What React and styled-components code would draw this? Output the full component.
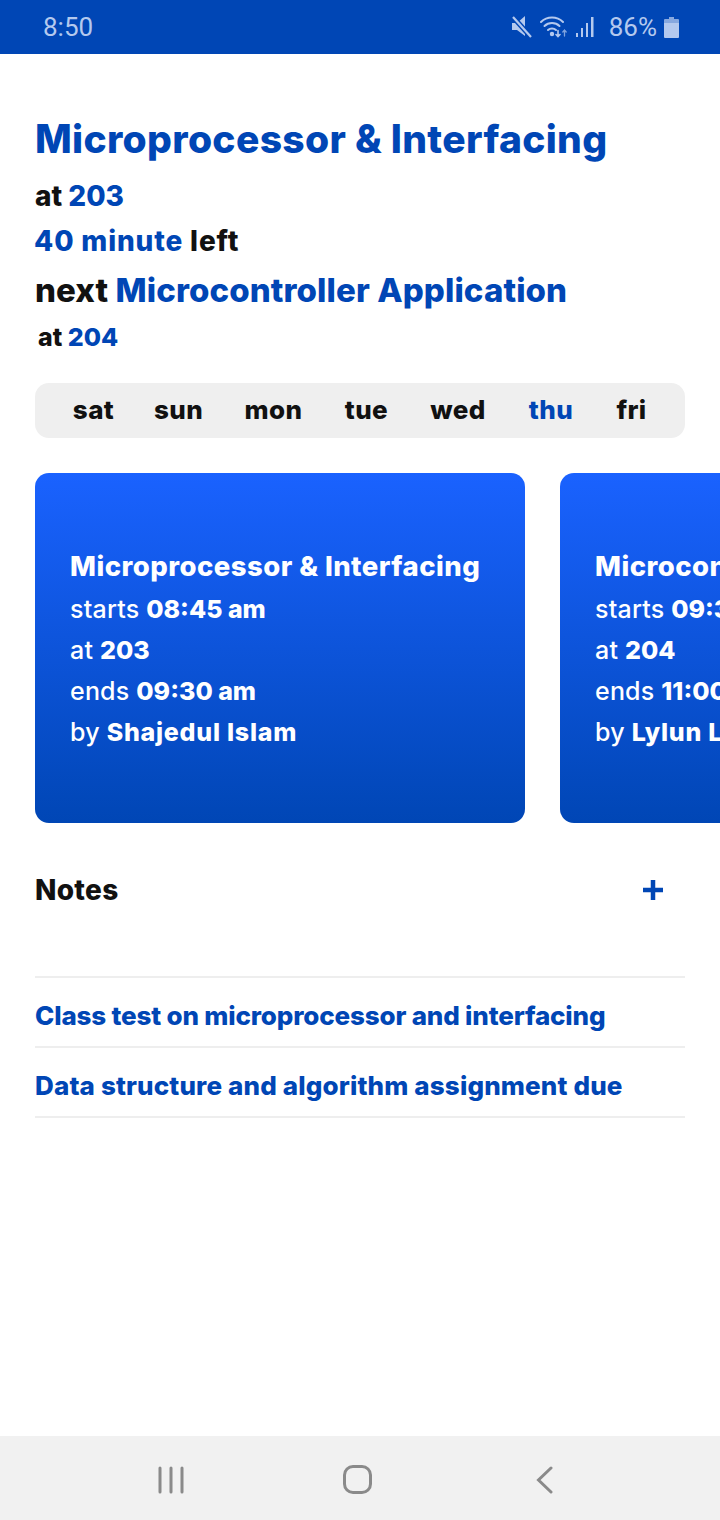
import React from "react";
import styled, { createGlobalStyle } from "styled-components";

const blue = "#0046b5";
const ink = "#111111";
const tint = "#b4c9ee";

const Global = createGlobalStyle`
  html, body { margin: 0; padding: 0; background: #fff; }
  * { box-sizing: border-box; }
  #root { width: 720px; height: 1520px; overflow: hidden; }
`;

const Screen = styled.div`
  width: 720px;
  height: 1520px;
  display: flex;
  flex-direction: column;
  font-family: Inter, "Noto Sans", sans-serif;
  color: ${ink};
  overflow: hidden;
`;

const StatusBar = styled.div`
  height: 54px;
  flex: none;
  background: ${blue};
  color: ${tint};
  font-family: Roboto, sans-serif;
  display: flex;
  align-items: center;
  justify-content: space-between;
  padding: 0 41px 0 43px;
`;
const Time = styled.span` font-size: 26px; `;
const StatusIcons = styled.div`
  display: flex;
  align-items: center;
  gap: 8px;
`;
const Battery = styled.span`
  font-size: 26px;
  margin-left: 7px;
  margin-right: -1px;
`;

const Main = styled.main`
  flex: 1;
  padding: 62px 0 0 35px;
  display: flex;
  flex-direction: column;
  min-height: 0;
`;

const Title = styled.h1`
  margin: 0 0 11px;
  font-size: 39px;
  line-height: 46px;
  font-weight: 800;
  color: ${blue};
  letter-spacing: 0.32px;
  white-space: nowrap;
`;
const Line = styled.div`
  font-size: ${(p) => p.$size}px;
  line-height: ${(p) => p.$lh}px;
  font-weight: 800;
  letter-spacing: ${(p) => p.$ls || 0}px;
  padding-left: ${(p) => p.$indent || 0}px;
  margin-left: ${(p) => p.$shift || 0}px;
  white-space: nowrap;
`;
const Em = styled.span` color: ${blue}; `;

const DayBar = styled.div`
  width: 650px;
  height: 55px;
  margin-top: 25px;
  border-radius: 14px;
  background: #efefef;
  display: grid;
  grid-template-columns: 85px 85px 105px 81px 102px 84px 77px;
  align-items: center;
  justify-items: center;
  padding-left: 16px;
`;
const Day = styled.span`
  font-size: 26px;
  font-weight: 800;
  letter-spacing: 0.4px;
  margin-top: -2px;
  color: ${(p) => (p.$active ? blue : ink)};
`;

const Cards = styled.div`
  display: flex;
  gap: 35px;
  margin-top: 35px;
  width: 900px;
`;
const Card = styled.div`
  flex: none;
  width: 490px;
  height: 350px;
  border-radius: 14px;
  background: linear-gradient(180deg, #1a62ff 0%, #0046b5 100%);
  color: #fff;
  padding: 73px 0 0 35px;
  white-space: nowrap;
  overflow: hidden;
`;
const CardTitle = styled.div`
  font-size: 27.5px;
  line-height: 41px;
  margin-bottom: 2px;
  font-weight: 800;
  letter-spacing: 0.46px;
`;
const CardRow = styled.div`
  font-size: 25px;
  line-height: 41px;
  font-weight: 500;
  letter-spacing: 0.2px;
  b { font-weight: 800; letter-spacing: ${(p) => p.$ls ?? 0}px; }
`;

const NotesHead = styled.div`
  width: 650px;
  margin-top: 47px;
  height: 40px;
  display: flex;
  align-items: center;
  justify-content: space-between;
  padding-right: 21px;
`;
const NotesTitle = styled.div`
  font-size: 28px;
  font-weight: 800;
  letter-spacing: 0.3px;
`;
const NoteList = styled.div`
  width: 650px;
  margin-top: 66px;
  border-top: 2px solid #eeeeee;
`;
const Note = styled.div`
  height: 70px;
  border-bottom: 2px solid #eeeeee;
  padding-top: 6px;
  display: flex;
  align-items: center;
  font-size: 26px;
  font-weight: 800;
  color: ${blue};
  white-space: nowrap;
  letter-spacing: ${(p) => p.$ls}px;
`;

const NavBar = styled.div`
  height: 84px;
  flex: none;
  background: #f1f1f1;
  padding: 3px 0 0 77px;
  display: grid;
  grid-template-columns: repeat(3, 187px);
  justify-items: center;
  align-items: center;
`;

const Plus = () => (
  <svg width="22" height="22" viewBox="0 0 22 22"><path d="M11 1v20M1 11h20" stroke={blue} strokeWidth="4.5" /></svg>
);

const MuteIcon = () => (
  <svg width="20" height="22" viewBox="0 0 20 22">
    <path d="M0 7h5l8-7v20l-8-6H0z" fill={tint} />
    <path d="M1 1l18 20" stroke={blue} strokeWidth="5" />
    <path d="M1 1l18 20" stroke={tint} strokeWidth="2.2" />
  </svg>
);
const WifiIcon = () => (
  <svg width="28" height="22" viewBox="0 0 28 22" fill="none" stroke={tint} strokeWidth="2" strokeLinecap="round">
    <path d="M1 6c6-6 16-6 22 0" />
    <path d="M4.500 10c4-4 11-4 15 0" />
    <path d="M8 14c2.200-2 5.800-2 8 0" />
    <circle cx="12" cy="18" r="1.200" fill={tint} />
    <path d="M18 14.500v6M16 18.500l2 2 2-2" strokeWidth="1.600" />
    <path d="M24.500 20v-6M22.800 16l1.700-2 1.700 2" strokeWidth="1.300" opacity=".7" />
  </svg>
);
const SignalIcon = () => (
  <svg width="18" height="20" viewBox="0 0 18 20" fill={tint}>
    <rect x="0" y="16" width="2" height="4" />
    <rect x="5" y="11" width="2" height="9" />
    <rect x="10" y="6" width="2" height="14" />
    <rect x="15" y="0" width="2.500" height="20" />
  </svg>
);
const BatteryIcon = () => (
  <svg width="15" height="21" viewBox="0 0 15 21" fill={tint}>
    <path d="M5 0h5v2h4a1 1 0 0 1 1 1v3H0V3a1 1 0 0 1 1-1h4z" opacity=".75" />
    <path d="M0 6h15v14a1 1 0 0 1-1 1H1a1 1 0 0 1-1-1z" />
  </svg>
);

const Recents = () => (
  <svg width="26" height="28" viewBox="0 0 26 28" stroke="#8a8a8a" strokeWidth="3" strokeLinecap="round">
    <path d="M2 2v24M13 2v24M24 2v24" />
  </svg>
);
const Home = () => (
  <svg width="29" height="29" viewBox="0 0 29 29" fill="none" stroke="#8a8a8a" strokeWidth="3">
    <rect x="1.500" y="1.500" width="26" height="26" rx="8.500" />
  </svg>
);
const Back = () => (
  <svg width="17" height="28" viewBox="0 0 17 28" fill="none" stroke="#8a8a8a" strokeWidth="3" strokeLinecap="round">
    <path d="M15 2L2.500 14 15 26" />
  </svg>
);

const days = ["sat", "sun", "mon", "tue", "wed", "thu", "fri"];
const classes = [
  { title: "Microprocessor & Interfacing", start: "08:45 am", room: "203", end: "09:30 am", by: "Shajedul Islam" },
  { title: "Microcontroller Application", start: "09:30 am", room: "204", end: "11:00 am", by: "Lylun Laila" },
];
const notes = [
  { text: "Class test on microprocessor and interfacing", ls: -0.16 },
  { text: "Data structure and algorithm assignment due", ls: 0.15 },
];

export default function App() {
  return (
    <Screen>
      <Global />
      <StatusBar>
        <Time>8:50</Time>
        <StatusIcons>
          <MuteIcon />
          <WifiIcon />
          <SignalIcon />
          <Battery>86%</Battery>
          <BatteryIcon />
        </StatusIcons>
      </StatusBar>
      <Main>
        <Title>Microprocessor &amp; Interfacing</Title>
        <Line $size={28} $lh={46} $ls={0}>at <Em>203</Em></Line>
        <Line $size={28} $lh={44} $ls={0.85} $shift={-1}>
          <Em>40 minute</Em> left
        </Line>
        <Line $size={33} $lh={54} $ls={0.1}>
          next <Em>Microcontroller Application</Em>
        </Line>
        <Line $size={25} $lh={41} $indent={3} $ls={0}>at <Em>204</Em></Line>
        <DayBar>
          {days.map((d) => (
            <Day key={d} $active={d === "thu"}>{d}</Day>
          ))}
        </DayBar>
        <Cards>
          {classes.map((c) => (
            <Card key={c.room}>
              <CardTitle>{c.title}</CardTitle>
              <CardRow>starts <b>{c.start}</b></CardRow>
              <CardRow>at <b>{c.room}</b></CardRow>
              <CardRow>ends <b>{c.end}</b></CardRow>
              <CardRow $ls={0.75}>by <b>{c.by}</b></CardRow>
            </Card>
          ))}
        </Cards>
        <NotesHead>
          <NotesTitle>Notes</NotesTitle>
          <Plus />
        </NotesHead>
        <NoteList>
          {notes.map((n) => (
            <Note key={n.text} $ls={n.ls}>{n.text}</Note>
          ))}
        </NoteList>
      </Main>
      <NavBar>
        <Recents />
        <Home />
        <Back />
      </NavBar>
    </Screen>
  );
}
